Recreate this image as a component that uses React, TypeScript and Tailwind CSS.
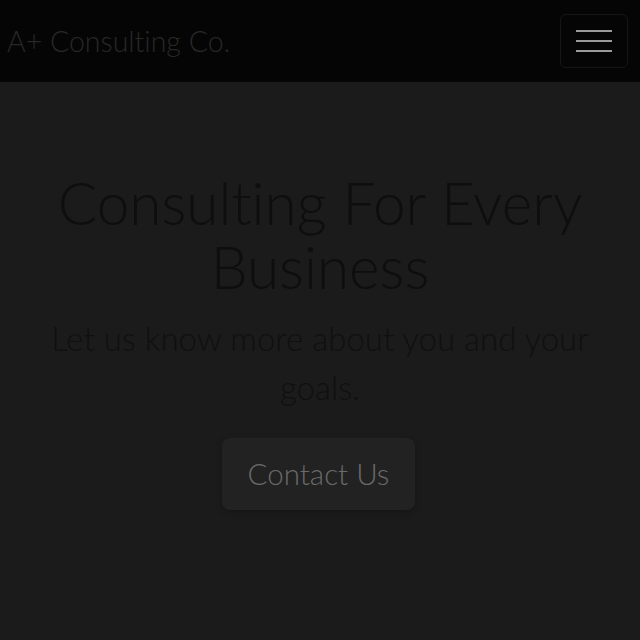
import React from 'react';

const App: React.FC = () => {
  return (
    <div className="min-h-screen w-full bg-[#1b1b1b] font-['Lato','Liberation_Sans',sans-serif] font-light [font-variant-ligatures:none]">
      {/* Navbar */}
      <nav className="h-[82px] bg-[#050505] flex items-center justify-between pl-[7px] pr-[12px]">
        <span className="text-[28.5px] text-[#282828] leading-none">A+ Consulting Co.</span>
        <button className="w-[68px] h-[54px] rounded-md border border-[#161616] flex flex-col items-center justify-center gap-[8px]">
          <span className="block w-[36px] h-[2px] bg-[#9a9a9a]" />
          <span className="block w-[36px] h-[2px] bg-[#9a9a9a]" />
          <span className="block w-[36px] h-[2px] bg-[#9a9a9a]" />
        </button>
      </nav>

      {/* Hero */}
      <section className="flex flex-col items-center text-center pt-[88px] px-6">
        <h1 className="text-[58.5px] leading-[64px] text-[#0e0e0e]">
          Consulting For Every Business
        </h1>
        <p className="mt-[16px] text-[33px] leading-[49px] text-[#101010] max-w-[580px]">
          Let us know more about you and your goals.
        </p>
        <button className="mt-[26px] -ml-[3px] w-[193px] h-[72px] rounded-lg bg-[#222222] text-[29.5px] text-[#6a6a6a] shadow-[0_2px_6px_rgba(0,0,0,0.25)]">
          Contact Us
        </button>
      </section>
    </div>
  );
};

export default App;
